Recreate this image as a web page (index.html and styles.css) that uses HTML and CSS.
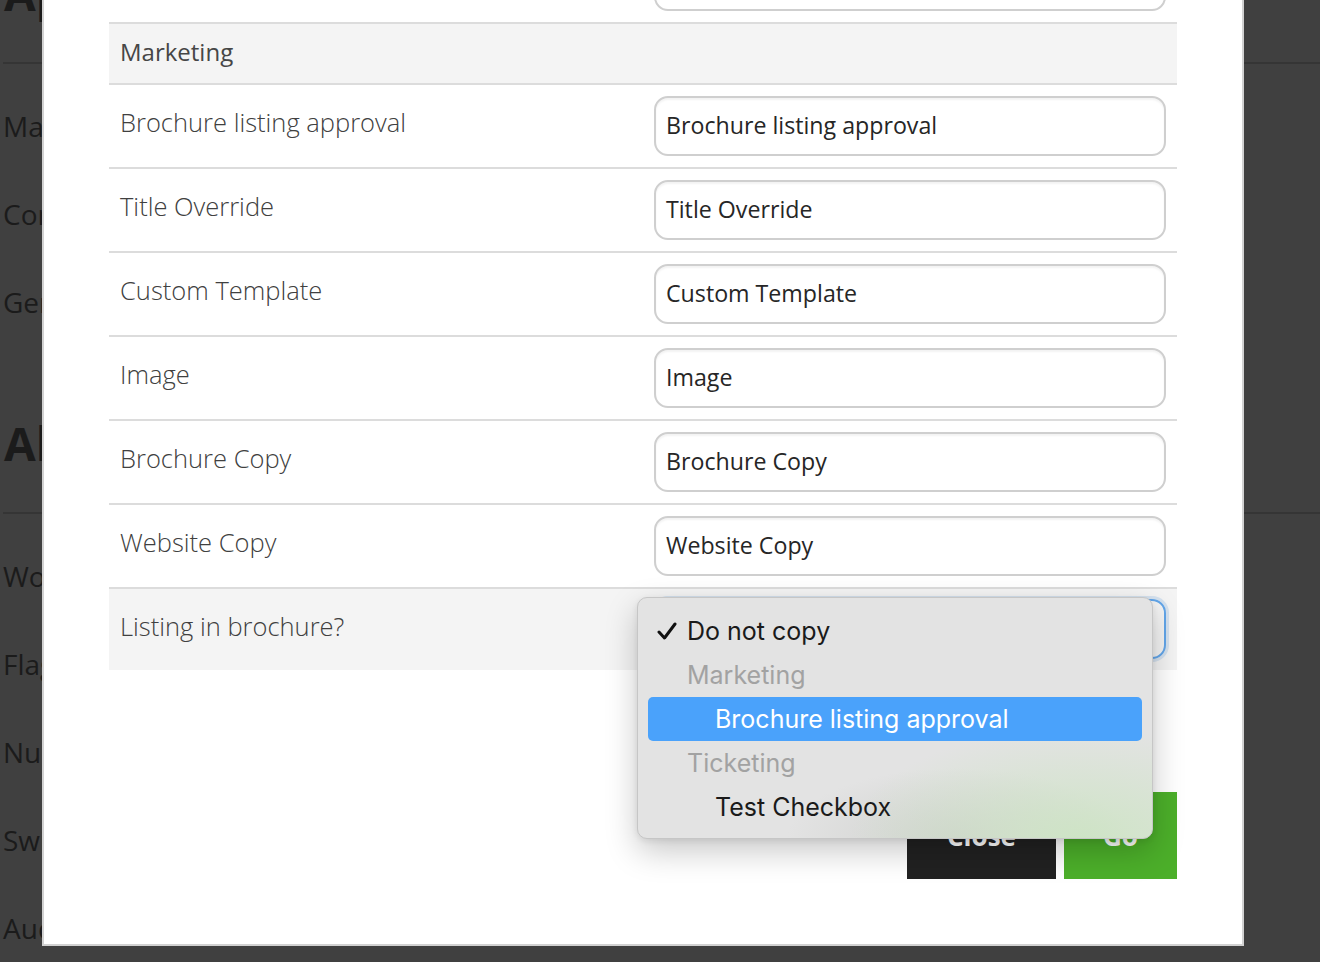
FILE: index.html
```html
<!DOCTYPE html>
<html lang="en">
<head>
    <meta charset="UTF-8">
    <meta name="viewport" content="width=device-width, initial-scale=1.0">
    <title>Copy Fields</title>
    <link rel="stylesheet" href="styles.css">
</head>
<body>
    <div class="page">
        <section class="page-section">
            <h2 class="page-heading">Approvals</h2>
            <div class="page-item">Marketing</div>
            <div class="page-item">Content</div>
            <div class="page-item">General</div>
        </section>
        <section class="page-section">
            <h2 class="page-heading">All fields</h2>
            <div class="page-item">Workflow</div>
            <div class="page-item">Flags</div>
            <div class="page-item">Numbers</div>
            <div class="page-item">Switches</div>
            <div class="page-item">Audience</div>
        </section>
    </div>

    <div class="modal">
        <div class="field-table">
            <div class="field-row">
                <div class="field-label"></div>
                <div class="field-input"><div class="text-input"></div></div>
            </div>
            <div class="group-row">Marketing</div>
            <div class="field-row">
                <div class="field-label">Brochure listing approval</div>
                <div class="field-input"><div class="text-input">Brochure listing approval</div></div>
            </div>
            <div class="field-row">
                <div class="field-label">Title Override</div>
                <div class="field-input"><div class="text-input">Title Override</div></div>
            </div>
            <div class="field-row">
                <div class="field-label">Custom Template</div>
                <div class="field-input"><div class="text-input">Custom Template</div></div>
            </div>
            <div class="field-row">
                <div class="field-label">Image</div>
                <div class="field-input"><div class="text-input">Image</div></div>
            </div>
            <div class="field-row">
                <div class="field-label">Brochure Copy</div>
                <div class="field-input"><div class="text-input">Brochure Copy</div></div>
            </div>
            <div class="field-row">
                <div class="field-label">Website Copy</div>
                <div class="field-input"><div class="text-input">Website Copy</div></div>
            </div>
            <div class="field-row field-row-active">
                <div class="field-label">Listing in brochure?</div>
                <div class="field-input"><div class="text-input select-box"></div></div>
            </div>
        </div>

        <div class="modal-footer">
            <button class="btn btn-close">Close</button>
            <button class="btn btn-go">Go</button>
        </div>
    </div>

    <!-- native select popup, open -->
    <div class="popup">
        <div class="popup-item popup-checked">
            <svg class="check" width="20" height="18" viewBox="0 0 20 18"><path d="M2 10 L7.5 16 L18 2" fill="none" stroke="#111" stroke-width="3" stroke-linecap="round" stroke-linejoin="round"/></svg>
            Do not copy
        </div>
        <div class="popup-item popup-group">Marketing</div>
        <div class="popup-item popup-selected">Brochure listing approval</div>
        <div class="popup-item popup-group">Ticketing</div>
        <div class="popup-item">Test Checkbox</div>
    </div>
</body>
</html>
```

FILE: styles.css
```css
* {
    box-sizing: border-box;
}

body {
    margin: 0;
    height: 962px;
    overflow: hidden;
    background-color: #404040;
    font-family: 'Open Sans', sans-serif;
}

/* page behind the overlay */
.page {
    margin-top: -37px;
    padding-left: 3px;
    color: #1b1b1b;
}

.page-heading {
    margin: 0;
    padding: 0 0 39px 1px;
    font-size: 46px;
    line-height: 60px;
    font-weight: 700;
    border-bottom: 2px solid #353535;
}

.page-section + .page-section .page-heading {
    margin-top: 67px;
}

.page-heading + .page-item {
    margin-top: 18px;
}

.page-item {
    height: 88px;
    line-height: 88px;
    font-size: 28px;
}

/* modal */
.modal {
    position: fixed;
    left: 42px;
    top: -2px;
    width: 1202px;
    height: 948px;
    background-color: #fff;
    border: 2px solid #d2d2d2;
    padding: 0 65px;
}

.field-table {
    margin-top: -60px;
}

.field-row {
    display: grid;
    grid-template-columns: 545px 1fr;
    border-bottom: 2px solid #dcdcdc;
}

.field-label {
    padding: 21px 11px 0;
    font-size: 25.5px;
    font-weight: 300;
    line-height: 32px;
    color: #404040;
}

.field-input {
    padding: 11px 11px 11px 0;
}

.text-input {
    height: 60px;
    line-height: 55px;
    padding: 0 10px;
    border: 2px solid #cfcfcf;
    border-radius: 14px;
    box-shadow: inset 0 2px 2px rgba(0, 0, 0, 0.05);
    font-size: 23.2px;
    color: #262626;
}

.group-row {
    height: 61px;
    line-height: 55px;
    padding-left: 11px;
    background-color: #f4f4f4;
    border-bottom: 2px solid #dcdcdc;
    font-size: 24px;
    font-weight: 500;
    color: #464646;
}

.field-row-active {
    background-color: #f4f4f4;
    border-bottom: none;
}

.field-row-active .field-input {
    padding-top: 10px;
}

.select-box {
    border-color: #62a6ea;
    box-shadow: 0 0 0 3px rgba(120, 170, 225, 0.25);
}

.modal-footer {
    display: flex;
    justify-content: flex-end;
    gap: 8px;
    margin-top: 122px;
}

.btn {
    height: 87px;
    border: none;
    color: #fff;
    font-family: 'Open Sans', sans-serif;
    font-size: 26px;
    font-weight: 700;
}

.btn-close {
    width: 149px;
    background-color: #212121;
}

.btn-go {
    width: 113px;
    background-color: #4caf2a;
}

/* macOS style option list */
.popup {
    position: fixed;
    left: 637px;
    top: 597px;
    width: 516px;
    height: 242px;
    padding: 11px 10px 9px;
    border: 1px solid #c6c6c6;
    border-radius: 10px;
    background:
        radial-gradient(ellipse 230px 110px at 86% 100%, rgba(205, 228, 196, 0.95), rgba(227, 227, 227, 0)),
        radial-gradient(ellipse 170px 70px at 62% 100%, rgba(205, 207, 204, 0.9), rgba(227, 227, 227, 0)),
        #e3e3e3;
    box-shadow: 0 12px 32px rgba(0, 0, 0, 0.22), 0 2px 6px rgba(0, 0, 0, 0.08);
    font-family: Inter, 'Noto Sans', sans-serif;
    font-size: 25px;
    color: #1a1a1a;
}

.popup-item {
    height: 44px;
    line-height: 44px;
    padding-left: 67px;
    white-space: nowrap;
}

.popup-checked {
    display: flex;
    align-items: center;
    gap: 10px;
    padding-left: 9px;
}

.popup-group {
    padding-left: 39px;
    color: #a2a2a2;
}

.popup-selected {
    background-color: #4aa2fb;
    color: #fff;
    border-radius: 5px;
}
```
